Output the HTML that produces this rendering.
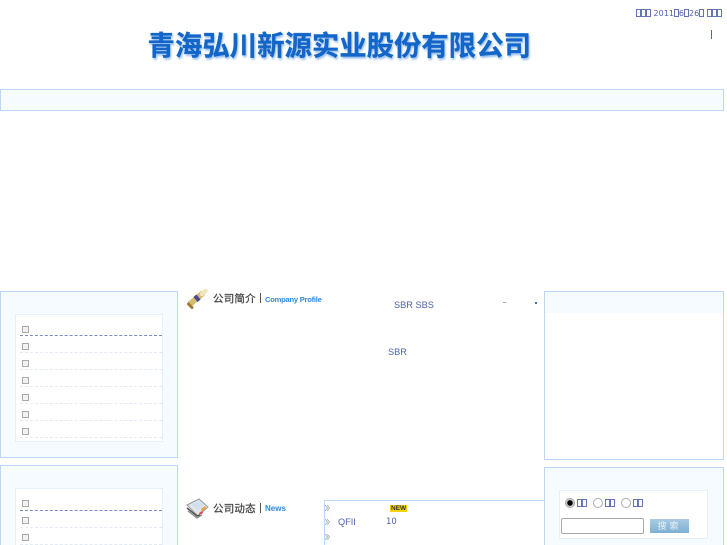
<!DOCTYPE html>
<html><head><meta charset="utf-8"><style>
html,body{margin:0;padding:0;background:#fff;width:727px;height:545px;overflow:hidden}
body{position:relative;font-family:"Liberation Sans","Noto Sans CJK SC",sans-serif;color:#4f62ad;filter:blur(.3px)}
.a{position:absolute;box-sizing:border-box}
.box{background:#f6fbff;border:1px solid #bdd7f7}
.in{background:#fff;border:1px solid #e6effa}
.ck{position:absolute;left:22px;width:7px;height:7px;box-sizing:border-box;background:#f2f2f2;border:1px solid #aaa}
.ln{position:absolute;left:20px;width:142px;height:0;border-top:1px dashed #e2eaf5}
.ln.d{border-top:1px dashed #8089c8}
.t{display:inline-block;box-sizing:border-box;width:5px;height:8px;border:1px solid #6474b8;vertical-align:-1px}
.tx{position:absolute;white-space:nowrap;font-size:10px;line-height:12px}
.ar{position:absolute;left:325px}
.rd{position:absolute;width:10px;height:10px;box-sizing:border-box;border:1px solid #aaa;border-radius:50%;background:#fff}
</style></head><body>
<div class="a" style="left:147.5px;top:24px;width:390px;font:bold 27.4px/38px 'Noto Sans CJK SC',sans-serif;color:#1265c9;white-space:nowrap;-webkit-text-stroke:.3px #1265c9;text-shadow:1px 2px 2px #8fb8e8">青海弘川新源实业股份有限公司</div>

<div class="tx" style="left:636px;top:8px;font-family:'DejaVu Sans',sans-serif;font-size:8px;color:#4f62ad"><span class="t"></span><span class="t"></span><span class="t"></span> 2011<span class="t"></span>6<span class="t"></span>26<span class="t"></span> <span class="t"></span><span class="t"></span><span class="t"></span></div>
<div class="a" style="left:711px;top:30px;width:1px;height:9px;background:#4f62ad"></div>

<div class="a box" style="left:0;top:89px;width:724px;height:22px"></div>

<div class="a box" style="left:0;top:291px;width:178px;height:167px"></div>
<div class="a in" style="left:15px;top:314px;width:148px;height:128px"></div>
<div class="ck" style="top:326px"></div><div class="ln d" style="top:335px"></div>
<div class="ck" style="top:343px"></div><div class="ln" style="top:352px"></div>
<div class="ck" style="top:360px"></div><div class="ln" style="top:369px"></div>
<div class="ck" style="top:377px"></div><div class="ln" style="top:386px"></div>
<div class="ck" style="top:394px"></div><div class="ln" style="top:403px"></div>
<div class="ck" style="top:411px"></div><div class="ln" style="top:420px"></div>
<div class="ck" style="top:428px"></div><div class="ln" style="top:437px"></div>

<div class="a box" style="left:0;top:465px;width:178px;height:90px"></div>
<div class="a in" style="left:15px;top:488px;width:148px;height:70px"></div>
<div class="ck" style="top:500px"></div><div class="ln d" style="top:510px"></div>
<div class="ck" style="top:517px"></div><div class="ln" style="top:527px"></div>
<div class="ck" style="top:534px"></div><div class="ln" style="top:544px"></div>

<svg class="a" style="left:187px;top:288px" width="21" height="21" viewBox="0 0 21 21">
<path d="M3 16 L16 5" stroke="#d9bc74" stroke-width="6"/>
<path d="M8.5 11.5 L11.5 9" stroke="#4a4a90" stroke-width="6.5"/>
<path d="M15 6 L18.5 3" stroke="#f0e4bc" stroke-width="4.5" stroke-linecap="round"/>
<path d="M1.5 16 L5 19.5" stroke="#a07a30" stroke-width="3" stroke-linecap="round"/>
</svg>
<div class="tx" style="left:213px;top:292px;font:10.5px/14px 'Noto Sans CJK SC',sans-serif;color:#444;letter-spacing:.2px;-webkit-text-stroke:.25px #444">公司简介</div>
<div class="a" style="left:260px;top:293px;width:1px;height:10px;background:#555"></div>
<div class="tx" style="left:265px;top:294px;font:bold 7.6px/12px 'Liberation Sans',sans-serif;letter-spacing:-.25px;color:#2f8ae0">Company Profile</div>

<div class="tx" style="left:394px;top:299px;font-size:9.2px;line-height:12px">SBR SBS</div>
<div class="a" style="left:503px;top:302px;width:3px;height:1px;background:#9aa5c8"></div>
<div class="a" style="left:535px;top:302px;width:2px;height:2px;background:#4f62ad"></div>
<div class="tx" style="left:388px;top:346px;font-size:9.2px">SBR</div>

<svg class="a" style="left:186px;top:498px" width="23" height="21" viewBox="0 0 23 21">
<path d="M1 7 L13 1 L22 9 L12 18 Z" fill="#e2e6ea" stroke="#999"/>
<path d="M5 7 L13 3 L18 8 L12 12 Z" fill="#cfe0ee"/>
<path d="M15 11 L19 8 L20 10 L16 14 Z" fill="#e8a040"/>
<path d="M13 15 L16 13 L17 15 L14 17 Z" fill="#d05050"/>
<path d="M1 10 L11 18 L14 17" fill="none" stroke="#555" stroke-width="1.5"/>
<path d="M2 13 L11 20 L16 17" fill="none" stroke="#888" stroke-width="1.2"/>
</svg>
<div class="tx" style="left:213px;top:502px;font:10.5px/14px 'Noto Sans CJK SC',sans-serif;color:#444;letter-spacing:.2px;-webkit-text-stroke:.25px #444">公司动态</div>
<div class="a" style="left:260px;top:503px;width:1px;height:10px;background:#555"></div>
<div class="tx" style="left:265px;top:503px;font:bold 8px/12px 'Liberation Sans',sans-serif;color:#2f8ae0">News</div>

<div class="a" style="left:324px;top:500px;width:221px;height:1px;background:#bdd7f7"></div>
<div class="a" style="left:324px;top:500px;width:1px;height:45px;background:#bdd7f7"></div>
<svg class="ar" style="top:505px" width="5" height="6" viewBox="0 0 6 7"><path d="M0 0 L3 3.5 L0 7 M2.5 0 L5.5 3.5 L2.5 7" fill="none" stroke="#a4a9b2"/></svg>
<svg class="ar" style="top:519px" width="5" height="6" viewBox="0 0 6 7"><path d="M0 0 L3 3.5 L0 7 M2.5 0 L5.5 3.5 L2.5 7" fill="none" stroke="#a4a9b2"/></svg>
<svg class="ar" style="top:534px" width="5" height="6" viewBox="0 0 6 7"><path d="M0 0 L3 3.5 L0 7 M2.5 0 L5.5 3.5 L2.5 7" fill="none" stroke="#a4a9b2"/></svg>
<div class="tx" style="left:390px;top:505px;background:#f2d400;font:bold 6.5px/7px 'Liberation Sans',sans-serif;color:#333;padding:0 1px">NEW</div>
<div class="tx" style="left:338px;top:516px;font-size:9.2px">QFII</div>
<div class="tx" style="left:386px;top:516px;font:8.5px/12px 'DejaVu Sans',sans-serif">10</div>

<div class="a box" style="left:544px;top:291px;width:180px;height:169px;background:#fff"></div>
<div class="a" style="left:545px;top:292px;width:178px;height:21px;background:#f6fbff"></div>

<div class="a box" style="left:544px;top:467px;width:180px;height:90px"></div>
<div class="a in" style="left:559px;top:490px;width:149px;height:49px"></div>
<div class="rd" style="left:565px;top:498px;background:radial-gradient(circle,#000 0 2.5px,#ccc 3px)"></div>
<div class="tx" style="left:577px;top:498px"><span class="t"></span><span class="t"></span></div>
<div class="rd" style="left:593px;top:498px"></div>
<div class="tx" style="left:605px;top:498px"><span class="t"></span><span class="t"></span></div>
<div class="rd" style="left:621px;top:498px"></div>
<div class="tx" style="left:633px;top:498px"><span class="t"></span><span class="t"></span></div>
<div class="a" style="left:561px;top:518px;width:83px;height:16px;background:#fff;border:1px solid #aaa;border-radius:2px"></div>
<div class="a" style="left:650px;top:519px;width:39px;height:14px;background:linear-gradient(#a9cbe2,#7fb0d2);color:#e8f2fa;font:9px/14px 'Noto Sans CJK SC',sans-serif;text-align:center;letter-spacing:3px">搜索</div>
</body></html>
